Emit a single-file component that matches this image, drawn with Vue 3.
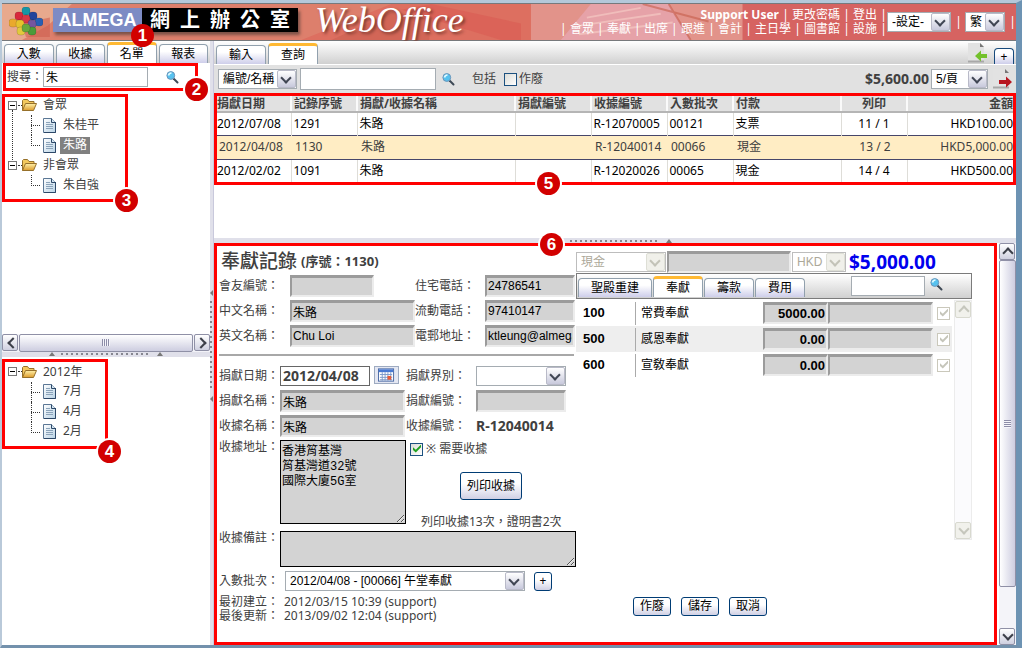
<script setup>
import { ref } from 'vue'

const sideTabs = ['入數', '收據', '名單', '報表']
const mainTabs = ['輸入', '查詢']
const fundTabs = ['聖殿重建', '奉獻', '籌款', '費用']
const menu = ['會眾', '奉獻', '出席', '跟進', '會計', '主日學', '圖書館', '設施']

const people = [
  { name: '會眾', items: ['朱桂平', '朱路'] },
  { name: '非會眾', items: ['朱自強'] },
]
const periods = [{ name: '2012年', items: ['7月', '4月', '2月'] }]

const columns = [
  ['捐獻日期', 'w74'], ['記錄序號', 'w66'], ['捐獻/收據名稱', 'auto'], ['捐獻編號', 'w76'],
  ['收據編號', 'w76'], ['入數批次', 'w66'], ['付款', 'w108'], ['列印', 'w66 mid'], ['金額', 'w106 end'],
]
const rows = [
  ['2012/07/08', '1291', '朱路', '', 'R-12070005', '00121', '支票', '11 / 1', 'HKD100.00'],
  ['2012/04/08', '1130', '朱路', '', 'R-12040014', '00066', '現金', '13 / 2', 'HKD5,000.00'],
  ['2012/02/02', '1091', '朱路', '', 'R-12020026', '00065', '現金', '14 / 4', 'HKD500.00'],
]
const funds = [
  { code: '100', name: '常費奉獻', amount: '5000.00' },
  { code: '500', name: '感恩奉獻', amount: '0.00' },
  { code: '600', name: '宣敎奉獻', amount: '0.00' },
]
const search = ref('朱')
const address = ref('香港筲基灣\n筲基灣道32號\n國際大廈5G室')
</script>

<template>
  <div class="app">
    <svg class="defs" aria-hidden="true">
      <defs>
        <linearGradient id="gold" x1="0" y1="0" x2="0" y2="1"><stop offset="0" stop-color="#fff0a8" /><stop offset="1" stop-color="#dd9c2c" /></linearGradient>
        <linearGradient id="paper" x1="0" y1="0" x2="1" y2="1"><stop offset="0" stop-color="#fff" /><stop offset="1" stop-color="#b9d3e6" /></linearGradient>
        <symbol id="folder" viewBox="0 0 16 16">
          <path d="M1.5 13.5V3.5l1-1h4l1.5 2h5v2" fill="#f3c85c" stroke="#96702a" />
          <path d="M1.5 13.5L4.5 6.5H15.5L12.5 13.5Z" fill="url(#gold)" stroke="#96702a" />
        </symbol>
        <symbol id="doc" viewBox="0 0 13 15">
          <path d="M.5 .5H8.5L12.5 4.5V14.5H.5Z" fill="url(#paper)" stroke="#5b7795" />
          <path d="M8.500 .5V4.500H12.500" fill="#d6e6f2" stroke="#2d4868" />
          <path d="M12.500 4V14.500H1" fill="none" stroke="#2d4868" />
          <path d="M3 4.500H7M3 6.500H10M3 8.500H10M3 10.500H10" stroke="#8ba3ba" />
        </symbol>
        <symbol id="lens" viewBox="0 0 13 13">
          <path d="M7.500 7.500L11.500 11.500" stroke="#3d4855" stroke-width="2" stroke-linecap="round" />
          <circle cx="4.800" cy="4.500" r="3.900" fill="#56c2ef" stroke="#6b95ba" />
          <path d="M2.500 4.500Q3 2 5.500 2" stroke="#e2faff" stroke-width="1.600" fill="none" />
        </symbol>
        <symbol id="sheet" viewBox="0 0 22 22">
          <path d="M1 1H13L17 5V19H1Z" fill="#e2e2e2" />
          <path d="M1 19.500H17" stroke="#a8a8a8" stroke-width="2" />
          <path d="M13 1V5H17Z" fill="#777" />
        </symbol>
      </defs>
    </svg>

    <header class="banner">
      <svg class="art" viewBox="0 0 1016 37" preserveAspectRatio="none" aria-hidden="true">
        <rect width="1016" height="37" fill="#d66361" />
        <rect width="560" height="37" fill="#dd7f6c" />
        <path d="M0 0H70L46 22 20 37H0Z" fill="#e8a98d" />
        <path d="M20 20L48 14V34H24Z" fill="#cf5f50" opacity=".6" />
        <path d="M300 37L390 0H530V37Z" fill="#dd6f60" />
        <path d="M330 37L392 8 430 16 428 37Z" fill="#c95e51" opacity=".55" />
        <path d="M430 0L520 20V37H500L400 6Z" fill="#d9584f" opacity=".5" />
        <rect x="530" width="212" height="37" fill="#e2938a" />
        <path d="M560 37L590 0H668L690 37Z" fill="#e6a2a8" />
        <path d="M586 14L640 4M580 22L660 10M578 31L672 19" stroke="#f0bdbb" stroke-width="2" />
        <path d="M642 0L708 18M668 0L690 37" stroke="#c75e4b" stroke-width="2" opacity=".6" />
      </svg>
      <div class="brand">
        <svg class="logo" viewBox="0 0 34 30" aria-label="Almega">
          <g stroke="#00000044" stroke-width=".5">
            <rect x="13" y="0" width="8" height="8" rx="3" fill="#1696a6" />
            <rect x="6" y="5" width="8" height="8" rx="3" fill="#d8283c" />
            <rect x="20" y="5" width="8" height="8" rx="3" fill="#22449b" />
            <rect x="0" y="12" width="8" height="8" rx="3" fill="#eaa92c" />
            <rect x="26" y="11" width="8" height="8" rx="3" fill="#275fb4" />
            <rect x="13" y="8" width="8" height="8" rx="3" fill="#d63847" />
            <rect x="7" y="13" width="8" height="8" rx="3" fill="#e6c32d" />
            <rect x="19" y="13" width="8" height="8" rx="3" fill="#75559f" />
            <rect x="8" y="20" width="8" height="8" rx="3" fill="#e2c93c" />
            <rect x="19" y="20" width="8" height="8" rx="3" fill="#4c9b3a" />
            <rect x="13" y="17" width="8" height="8" rx="3" fill="#68a73d" />
          </g>
        </svg>
        <div class="plate"><b>ALMEGA</b><strong>網&ensp;上&ensp;辦&ensp;公&ensp;室</strong></div>
        <em class="product">WebOffice</em>
      </div>
      <nav class="links">
        <div class="line"><b>Support User</b><i>|</i><a href="#">更改密碼</a><i>|</i><a href="#">登出</a><i>|</i></div>
        <div class="line"><i>|</i><template v-for="m in menu" :key="m"><a href="#">{{ m }}</a><i>|</i></template></div>
      </nav>
      <span class="sel setting"><select aria-label="設定"><option>-設定-</option></select></span>
      <i class="bar">|</i>
      <span class="sel lang"><select aria-label="語言"><option>繁</option></select></span>
      <i class="bar">|</i>
    </header>

    <div class="body">
      <aside class="side">
        <nav class="tabs">
          <button v-for="t in sideTabs" :key="t" class="tab" :class="{ on: t === '名單' }">{{ t }}</button>
          <span class="badge b1">1</span>
        </nav>
        <div class="find frame">
          <label for="find">搜尋：</label>
          <input id="find" v-model="search" class="plain" />
          <button class="icon" aria-label="搜尋"><svg><use href="#lens" /></svg></button>
          <span class="badge corner">2</span>
        </div>
        <div class="pane upper">
          <div class="tree frame">
            <ul>
              <li v-for="g in people" :key="g.name" class="group">
                <div class="node"><span class="toggle"></span><svg class="folder"><use href="#folder" /></svg><span>{{ g.name }}</span></div>
                <ul class="kids">
                  <li v-for="p in g.items" :key="p" class="node"><svg class="doc"><use href="#doc" /></svg><span class="leaf" :class="{ picked: p === '朱路' }">{{ p }}</span></li>
                </ul>
              </li>
            </ul>
            <span class="badge corner">3</span>
          </div>
        </div>
        <div class="hbar"><span class="sb left"></span><span class="thumb"><i></i></span><span class="sb right"></span></div>
        <div class="split"><span class="dots"></span></div>
        <div class="pane lower">
          <div class="tree small frame">
            <ul>
              <li v-for="g in periods" :key="g.name" class="group">
                <div class="node"><span class="toggle"></span><svg class="folder"><use href="#folder" /></svg><span>{{ g.name }}</span></div>
                <ul class="kids">
                  <li v-for="p in g.items" :key="p" class="node"><svg class="doc"><use href="#doc" /></svg><span class="leaf">{{ p }}</span></li>
                </ul>
              </li>
            </ul>
            <span class="badge corner">4</span>
          </div>
        </div>
      </aside>

      <div class="vsplit"><span class="vdots"></span></div>

      <main class="main">
        <nav class="tabs top">
          <button v-for="t in mainTabs" :key="t" class="tab" :class="{ on: t === '查詢' }">{{ t }}</button>
          <span class="grow"></span>
          <button class="icon page" aria-label="返回"><svg viewBox="0 0 22 22"><use href="#sheet" /><path d="M8 14L14 8.500V12H20V16H14V19.500Z" fill="#73c12b" /></svg></button>
          <button class="tab plus" aria-label="新增">+</button>
        </nav>
        <div class="toolbar">
          <span class="sel by"><select aria-label="搜尋欄位"><option>編號/名稱</option></select></span>
          <input class="plain query" aria-label="關鍵字" />
          <button class="icon" aria-label="查詢"><svg><use href="#lens" /></svg></button>
          <span class="inc">包括</span>
          <label class="void"><input type="checkbox" />作廢</label>
          <span class="grow"></span>
          <b class="sum">$5,600.00</b>
          <span class="sel per"><select aria-label="每頁"><option>5/頁</option></select></span>
          <button class="icon page" aria-label="前往"><svg viewBox="0 0 22 22"><use href="#sheet" /><path d="M20 14L14 8.500V12H7V16H14V19.500Z" fill="#b81620" /></svg></button>
        </div>

        <div class="list">
          <div class="frame grid">
            <table>
              <thead><tr><th v-for="c in columns" :key="c[0]" :class="c[1]">{{ c[0] }}</th></tr></thead>
              <tbody>
                <tr v-for="(r, i) in rows" :key="r[1]" :class="{ current: i === 1 }">
                  <td v-for="(v, k) in r" :key="k" :class="columns[k][1]">{{ v }}</td>
                </tr>
              </tbody>
            </table>
            <span class="badge b5">5</span>
          </div>
        </div>

        <div class="split"><span class="dots"></span></div>

        <div class="lowerRight">
          <section class="detail frame">
            <span class="badge b6">6</span>
            <div class="cols">
              <div class="form">
                <h1>奉獻記錄<small>(序號：1130)</small></h1>
                <div class="rows member">
                  <label for="m1">會友編號：</label><input id="m1" class="field short" readonly />
                  <label for="m2">住宅電話：</label><input id="m2" class="field" value="24786541" readonly />
                  <label for="m3">中文名稱：</label><input id="m3" class="field" value="朱路" readonly />
                  <label for="m4">流動電話：</label><input id="m4" class="field" value="97410147" readonly />
                  <label for="m5">英文名稱：</label><input id="m5" class="field" value="Chu Loi" readonly />
                  <label for="m6">電郵地址：</label><input id="m6" class="field" value="ktleung@almega.com" readonly />
                </div>
                <hr />
                <div class="rows gift">
                  <label for="g1">捐獻日期：</label>
                  <span class="date"><input id="g1" value="2012/04/08" />
                    <button aria-label="日曆"><svg viewBox="0 0 18 14"><rect x=".5" y=".5" width="16" height="13" fill="#fff" stroke="#4868a4" /><rect x="1" y="1" width="15" height="3" fill="#4879d3" /><path d="M2 6.500H15M2 9.500H15M2 12H15M4.500 4V13M7.500 4V13M10.500 4V13M13.500 4V13" stroke="#7d9ac9" /><rect x="10" y="8" width="4" height="4" fill="#e75b39" /></svg></button>
                  </span>
                  <label for="g2">捐獻界別：</label>
                  <span class="sel kind"><select id="g2"><option></option></select></span>
                  <label for="g3">捐獻名稱：</label><input id="g3" class="field" value="朱路" readonly />
                  <label for="g4">捐獻編號：</label><input id="g4" class="field code" readonly />
                  <label for="g5">收據名稱：</label><input id="g5" class="field" value="朱路" readonly />
                  <span>收據編號：</span><b class="receipt">R-12040014</b>
                </div>
                <div class="address">
                  <label for="addr">收據地址：</label>
                  <textarea id="addr" v-model="address" readonly></textarea>
                  <div class="aside">
                    <label class="need"><input type="checkbox" checked />※ 需要收據</label>
                    <button class="btn big">列印收據</button>
                    <span class="times">列印收據13次，證明書2次</span>
                  </div>
                </div>
                <div class="remark">
                  <label for="rem">收據備註：</label>
                  <textarea id="rem" readonly></textarea>
                </div>
                <div class="batch">
                  <label for="bat">入數批次：</label>
                  <span class="sel"><select id="bat"><option>2012/04/08 - [00066] 午堂奉獻</option></select></span>
                  <button class="btn tiny" aria-label="新增批次">+</button>
                </div>
              </div>

              <div class="money">
                <div class="pay">
                  <span class="sel off"><select disabled aria-label="付款"><option>現金</option></select></span>
                  <input class="field" aria-label="付款備註" readonly />
                  <span class="sel off cur"><select disabled aria-label="貨幣"><option>HKD</option></select></span>
                  <b>$5,000.00</b>
                </div>
                <nav class="tabs funds">
                  <button v-for="t in fundTabs" :key="t" class="tab" :class="{ on: t === '奉獻' }">{{ t }}</button>
                  <span class="grow"></span>
                  <input class="plain" aria-label="搜尋奉獻" />
                  <button class="icon" aria-label="搜尋"><svg><use href="#lens" /></svg></button>
                </nav>
                <div class="fundBody">
                  <div class="fundList">
                    <div v-for="f in funds" :key="f.code" class="fund">
                      <b>{{ f.code }}</b><span class="fname">{{ f.name }}</span>
                      <input class="field amount" :value="f.amount" :aria-label="f.name" readonly />
                      <input class="field note" :aria-label="f.name + ' 備註'" readonly />
                      <input type="checkbox" checked disabled :aria-label="f.name + ' 收據'" />
                    </div>
                  </div>
                  <div class="vbar pale"><span class="sb up"></span><span class="grow"></span><span class="sb down"></span></div>
                </div>
              </div>
            </div>
            <footer class="foot">
              <dl><dt>最初建立：</dt><dd>2012/03/15 10:39 (support)</dd><dt>最後更新：</dt><dd>2013/09/02 12:04 (support)</dd></dl>
              <button class="btn">作廢</button><button class="btn">儲存</button><button class="btn">取消</button>
            </footer>
          </section>
          <div class="vbar"><span class="sb up"></span><span class="thumb v"><i></i></span><span class="sb down"></span></div>
        </div>
      </main>
    </div>
  </div>
</template>

<style>
body { background: #fff; }
</style>

<style scoped>
* { box-sizing: border-box; }
.app {
  display: flex; flex-direction: column; min-height: 100vh;
  border: solid; border-width: 3px 6px 3px 2px; border-color: #b4c8da #6d93b3 #7391ac #b9c9d9;
  font: 12px/14px "Noto Sans", "Noto Sans CJK TC", sans-serif; color: #404040;
}
.defs { position: absolute; width: 0; height: 0; }
button, input, select, textarea { font: inherit; color: #000; margin: 0; padding: 0; border-radius: 0; min-width: 0; }
i { font-style: normal; }
.grow { flex: 1; }
ul, dl, dd, h1 { margin: 0; padding: 0; list-style: none; }

/* banner */
.banner { position: relative; display: flex; align-items: center; height: 38px; border: solid #77797c; border-width: 1px 0; color: #fff; flex: none; }
.art { position: absolute; inset: 0; width: 100%; height: 100%; }
.banner > :not(.art) { position: relative; }
.brand { display: flex; align-items: center; flex: 1; }
.logo { width: 34px; height: 30px; margin: 0 10px 0 7px; }
.plate { display: flex; margin-bottom: 4px; box-shadow: 2px 3px 3px #7b5147; font: 20px/24px "Liberation Sans", "Noto Sans CJK TC", sans-serif; }
.plate b { width: 89px; background: #7d8bc4; font-size: 18px; text-align: center; }
.plate strong { width: 156px; background: #000; text-align: center; white-space: nowrap; }
.product { margin: 0 0 4px 17px; font: italic 36px/36px "Liberation Serif", serif; text-shadow: 2px 2px 3px #7c3a30; }
.line { display: flex; justify-content: flex-end; gap: 3px; white-space: nowrap; }
.line a { color: #fff; text-decoration: none; }
.line i, .bar { width: 7px; text-align: center; }
.setting { width: 64px; margin-right: 4px; }
.lang { width: 40px; margin: 0 4px 0 3px; }

/* selects */
.sel { position: relative; display: inline-block; height: 20px; flex: none; }
.sel select { appearance: none; width: 100%; height: 100%; padding: 0 18px 0 4px; border: 1px solid #a5acb2; background: #fff; font: 12px/16px "Liberation Sans", "Noto Sans CJK TC", sans-serif; }
.sel::after { content: ""; position: absolute; right: 1px; top: 1px; bottom: 1px; width: 17px; border: 1px solid #b9bac8; border-radius: 2px; background: linear-gradient(#fff, #c8c9dc); pointer-events: none; }
.sel::before { content: ""; position: absolute; z-index: 1; right: 7px; top: 5px; width: 6px; height: 6px; border: solid #404654; border-width: 0 2px 2px 0; transform: rotate(45deg); pointer-events: none; }
.sel.off select { color: #aca899; border-color: #bdbdbd; opacity: 1; }
.sel.off::after { background: #f0f0ea; border-color: #dedfd6; }
.sel.off::before { border-color: #c3c3b8; }

/* callouts */
.frame { position: relative; border: 3px solid #f00; }
.badge { position: absolute; z-index: 5; width: 23px; height: 23px; border-radius: 50%; background: #d20000; box-shadow: 0 0 0 2px #fff; color: #fff; font: bold 17px/23px "Liberation Sans", sans-serif; text-align: center; }
.corner { right: -13px; bottom: -13px; }
.small .corner { right: -16px; bottom: -17px; }
.b1 { left: 129px; top: -17px; box-shadow: none; }
.b5 { left: 320px; bottom: -13px; }
.b6 { left: 323px; top: -13px; }

/* layout */
.body { display: flex; flex: 1; }
.side { width: 208px; flex: none; display: flex; flex-direction: column; background: #fff; }
.main { flex: 1; min-width: 0; display: flex; flex-direction: column; }
.vsplit { position: relative; width: 4px; flex: none; background: #e0e0ea; border-right: 1px solid #c9c9dc; }
.vdots { position: absolute; left: 0; top: 43%; width: 2px; height: 90px; background: repeating-linear-gradient(#85858f 0 2px, #e0e0ea 2px 5px); }
.vdots::before, .vdots::after { content: ""; position: absolute; left: 0; top: -11px; border: solid transparent; border-width: 3px 3px 3px 0; border-right-color: #777; }
.vdots::after { top: auto; bottom: -11px; }
.split { display: flex; justify-content: center; align-items: center; gap: 6px; height: 5px; flex: none; background: #e0e0ea; }
.split::before, .split::after { content: ""; border: solid transparent; border-width: 0 3px 4px; border-bottom-color: #777; }
.dots { width: 90px; height: 2px; background: repeating-linear-gradient(90deg, #85858f 0 2px, #e0e0ea 2px 5px); }

/* tabs */
.tabs { position: relative; display: flex; align-items: flex-end; gap: 2px; height: 22px; padding: 0 2px; flex: none; background: linear-gradient(#fff, #d0d0d0); }
.tab { width: 50px; height: 19px; border: 1px solid #91a0ad; border-bottom: 0; border-radius: 4px 4px 0 0; background: linear-gradient(#fff 35%, #ceceea); text-align: center; line-height: 18px; }
.tab.on { height: 21px; border-top: 3px solid #ffb933; background: #fff; }
.side .tab { flex: 1; }
.top { height: 24px; padding: 0 2px; border-bottom: 1px solid #fff; }
.top .plus { width: 20px; height: 16px; border-color: #174a7c; line-height: 15px; }
.icon { border: 0; background: none; width: 13px; height: 13px; display: flex; flex: none; }
.icon svg { width: 13px; height: 13px; }
.page, .page svg { width: 22px; height: 22px; }
.top .page { margin-right: 3px; }
.plain { border: 1px solid #a5acb2; background: #fff; padding: 0 2px; height: 20px; }

/* sidebar */
.find { display: flex; align-items: center; height: 28px; margin: 0 12px 3px 1px; }
.find .plain { width: 105px; }
.find .icon { margin-left: 18px; }
.find label { white-space: nowrap; margin-left: 1px; }
.upper { flex: 240 1 0; }
.lower { flex: 287 1 0; padding-top: 2px; }
.tree { width: 126px; padding: 0 0 4px 3px; }
.tree > ul { margin-top: -2px; }
.tree.small { width: 106px; padding-bottom: 4px; }
.tree.small > ul { margin-top: 0; }
.node { position: relative; display: flex; align-items: center; height: 20px; white-space: nowrap; }
.group { position: relative; }
.group:not(:last-child)::before { content: ""; position: absolute; left: 4px; top: 15px; bottom: -5px; border-left: 1px dotted #333; }
.toggle { position: relative; width: 9px; height: 9px; border: 1px solid #777; background: linear-gradient(#000, #000) center / 5px 1px no-repeat #fff; }
.toggle::after { content: ""; position: absolute; left: 9px; top: 3px; width: 4px; border-top: 1px dotted #333; }
.folder { width: 16px; height: 16px; margin: 0 6px 0 4px; }
.kids .node { padding-left: 35px; }
.kids .node::before { content: ""; position: absolute; left: 23px; top: 0; bottom: 0; border-left: 1px dotted #333; }
.kids .node:last-child::before { bottom: 9px; }
.kids .node::after { content: ""; position: absolute; left: 23px; top: 10px; width: 9px; border-top: 1px dotted #333; }
.doc { width: 13px; height: 15px; }
.leaf { margin-left: 4px; padding: 1px 3px 2px; }
.picked { background: #808080; color: #fff; }

/* scroll bars */
.sb { position: relative; width: 16px; height: 17px; flex: none; border: 1px solid #8f90a6; border-radius: 2px; background: linear-gradient(#fff, #cfd0e0); }
.sb::after { content: ""; position: absolute; left: 4px; top: 5px; width: 6px; height: 6px; border: solid #3c3f49; border-width: 2px 0 0 2px; transform: rotate(45deg); }
.sb.down::after { top: 2px; transform: rotate(225deg); }
.sb.left::after { left: 6px; top: 4px; transform: rotate(-45deg); }
.sb.right::after { left: 2px; top: 4px; transform: rotate(135deg); }
.hbar { display: flex; gap: 1px; height: 18px; flex: none; background: #f2f2f8; }
.thumb { display: flex; align-items: center; justify-content: center; flex: 1; border: 1px solid #8f90a6; border-radius: 2px; background: linear-gradient(#fff, #cdcde0); }
.thumb i { width: 8px; height: 7px; background: repeating-linear-gradient(90deg, #8d8da8 0 1px, #f5f5fb 1px 2px); }
.vbar { display: flex; flex-direction: column; width: 17px; flex: none; background: #f4f4f9; }
.thumb.v { background: linear-gradient(90deg, #fff, #cdcde0); margin-bottom: 41px; }
.thumb.v i { width: 7px; height: 8px; background: repeating-linear-gradient(#8d8da8 0 1px, #f5f5fb 1px 2px); }
.pale { width: 18px; background: #fbfbfd; border: 1px solid #ececec; }
.pale .sb { border-color: #d8d9cf; background: #f1f1ec; }
.pale .sb::after { border-color: #c6c7bd; }

/* query */
.toolbar { display: flex; align-items: center; height: 28px; padding: 0 2px 0 4px; background: #e1e1e1; flex: none; }
.by { width: 79px; }
.by select { padding-left: 4px; }
.query { width: 136px; margin: 0 6px 0 3px; height: 22px; }
.inc { margin-left: 17px; }
.void { display: flex; align-items: center; gap: 2px; margin-left: 8px; }
.sum { font-size: 14px; margin-right: 2px; }
.per { width: 57px; }
.toolbar .page { margin-left: 4px; }
input[type="checkbox"] { appearance: none; position: relative; width: 13px; height: 13px; flex: none; border: 1px solid #1c5180; background: linear-gradient(135deg, #dcdcd7, #fff); }
input[type="checkbox"]:checked::after { content: ""; position: absolute; left: 2px; top: 1px; width: 8px; height: 8px; background: #21a121; clip-path: polygon(0 35%, 35% 65%, 100% 0, 100% 35%, 35% 100%, 0 70%); }
input[type="checkbox"]:disabled { border-color: #cac8bb; background: #fff; }
input[type="checkbox"]:disabled::after { background: #c5c5ba; }
.list { flex: 1; background: #fff; }
table { width: 100%; border-collapse: collapse; table-layout: fixed; color: #000; }
th { height: 16px; padding: 0 2px; background: #e1e1e1; border-right: 2px solid #fafafa; border-bottom: 2px solid #b5b5b5; color: #404040; text-align: left; line-height: 14px; }
td { height: 23px; padding: 0 2px; border-right: 1px solid #deddd8; white-space: nowrap; }
td:first-child, th:first-child { padding-left: 0; }
th:last-child, td:last-child { border-right: 0; padding-right: 0; }
.current td { height: 24px; padding-left: 4px; border: solid #46466a; border-width: 1px 0; background: #ffedc4; color: #404040; }
.current td:first-child { padding-left: 2px; }
.w66 { width: 66px; }
.w74 { width: 74px; }
.w76 { width: 76px; }
.w106 { width: 106px; }
.w108 { width: 108px; }
.mid { text-align: center; }
.end { text-align: right; }

/* record */
.lowerRight { display: flex; gap: 2px; flex: none; }
.detail { flex: 1; min-width: 0; padding: 0 22px 19px 2px; background: #fff; }
.cols { display: flex; }
.form { width: 357px; flex: none; }
h1 { display: flex; align-items: center; gap: 4px; height: 27px; padding: 3px 0 0 2px; font-size: 19px; line-height: 24px; font-weight: 500; }
h1 small { font-size: 13px; font-weight: bold; }
.rows { display: grid; grid-auto-rows: 25px; align-items: center; white-space: nowrap; }
.member { grid-template-columns: 71px 125px 70px 1fr; padding-right: 1px; }
.gift { grid-template-columns: 61px 126px 70px 1fr; }
.field { width: 100%; height: 22px; padding: 0 1px; border: solid; border-width: 3px 2px 2px; border-color: #9b9b9b #ececec #ececec #9b9b9b; background: #d3d3d3; font: 12px/16px "Liberation Sans", "Noto Sans CJK TC", sans-serif; }
.short { width: 84px; }
.gift .field { width: 125px; }
.gift .code { width: 90px; }
hr { height: 2px; margin: 6px 2px 7px 0; border: 0; background: #a8a8a8; }
.date { display: flex; align-items: center; gap: 4px; }
.date input { width: 90px; height: 20px; border: 1px solid #666; padding: 0 2px; font-weight: bold; font-size: 14px; color: #404040; }
.date button { display: flex; align-self: flex-start; width: 25px; height: 18px; padding: 1px 3px; border: 1px solid #9eabc1; background: #e4e7f2; }
.date svg { width: 18px; height: 14px; }
.kind { width: 90px; }
.receipt { font-size: 14px; }
.address, .remark { display: flex; }
.address { height: 93px; padding-top: 2px; }
.address > label, .remark > label, .batch > label { width: 61px; flex: none; white-space: nowrap; }
textarea { resize: both; display: block; width: 126px; height: 84px; padding: 4px 1px; border: 1px solid #000; background: #d3d3d3; line-height: 15px; overflow: hidden; font-family: "Liberation Mono", "Noto Sans CJK TC", monospace; }
.remark textarea { flex: 1; height: 36px; }
.aside { display: flex; flex-direction: column; align-items: flex-start; padding-left: 4px; white-space: nowrap; }
.need { display: flex; align-items: center; gap: 3px; height: 18px; }
.btn { width: 38px; height: 19px; border: 1px solid #003c74; border-radius: 3px; background: linear-gradient(#fff 40%, #d0d0e4); line-height: 16px; white-space: nowrap; }
.btn.big { width: 62px; height: 28px; margin: 14px 0 15px 50px; }
.times { margin-left: 11px; }
.batch { display: flex; align-items: center; height: 28px; }
.batch .sel { width: 240px; margin: 0 9px 0 5px; }
.btn.tiny { width: 18px; }

.money { flex: 1; min-width: 0; padding-top: 4px; }
.pay { display: flex; align-items: center; height: 23px; }
.pay .sel { width: 90px; margin-right: 1px; }
.pay .field { width: 124px; margin-right: 1px; }
.pay .cur { width: 54px; margin-right: 3px; }
.pay b { color: #00e; font-size: 19px; line-height: 22px; }
.funds { height: 26px; padding: 0 1px 1px; gap: 1px; border: 1px solid #7b7b7b; }
.funds .tab:first-child { width: 74px; }
.funds .plain { width: 74px; align-self: center; }
.funds .icon { margin: 0 27px 0 4px; align-self: center; height: 16px; }
.fundBody { display: flex; height: 240px; margin-top: 1px; gap: 2px; }
.fundList { flex: 1; }
.fund { display: flex; align-items: center; height: 26px; padding: 0 2px 0 7px; color: #000; }
.fund:nth-child(even) { background: #eee; }
.fund b, .amount { font: bold 13px/16px "Liberation Sans", sans-serif; }
.fund b { width: 52px; }
.fname { flex: 1; height: 23px; padding: 4px 0 0 5px; border-left: 1px solid #aaa; }
.amount { width: 65px; text-align: right; }
.note { width: 105px; margin-right: 4px; }

.foot { display: flex; align-items: center; gap: 10px; }
.foot dl { display: grid; grid-template-columns: 65px 1fr; width: 404px; white-space: nowrap; }
.foot .btn { margin-bottom: 6px; }
</style>
